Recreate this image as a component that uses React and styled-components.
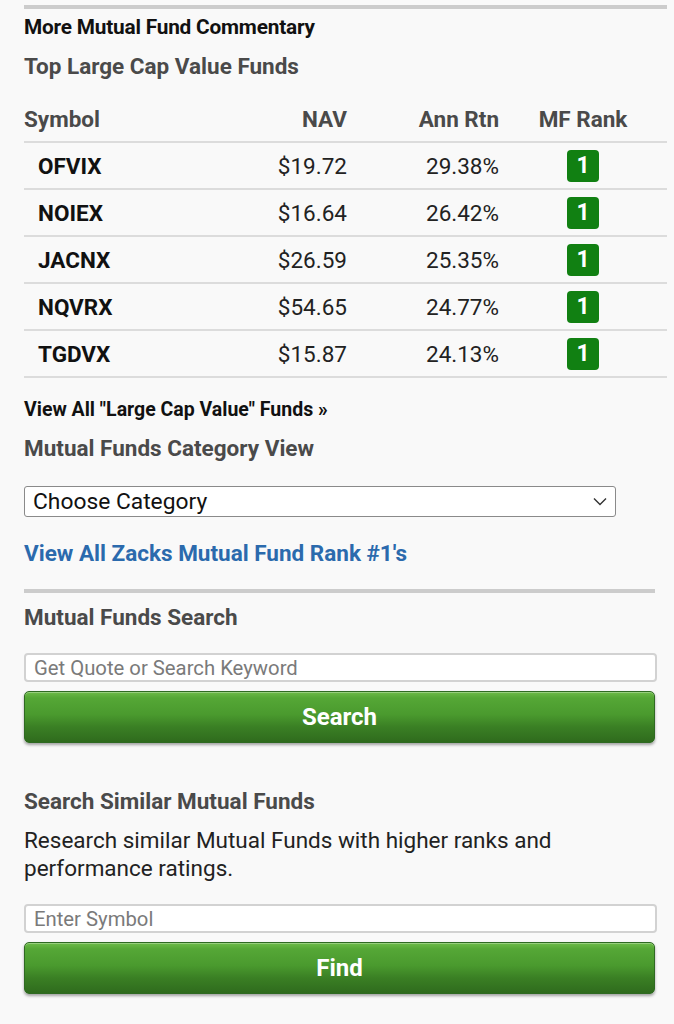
import React from "react";
import styled, { createGlobalStyle } from "styled-components";

const funds = [
  { symbol: "OFVIX", nav: "$19.72", rtn: "29.38%", rank: 1 },
  { symbol: "NOIEX", nav: "$16.64", rtn: "26.42%", rank: 1 },
  { symbol: "JACNX", nav: "$26.59", rtn: "25.35%", rank: 1 },
  { symbol: "NQVRX", nav: "$54.65", rtn: "24.77%", rank: 1 },
  { symbol: "TGDVX", nav: "$15.87", rtn: "24.13%", rank: 1 },
];

function App() {
  return (
    <>
      <GlobalStyle />
      <Page>
        <Rule />
        <Commentary>More Mutual Fund Commentary</Commentary>
        <SectionTitle $top={13}>Top Large Cap Value Funds</SectionTitle>

        <Table>
          <HeadRow>
            <HeadCell>Symbol</HeadCell>
            <HeadCell $align="right">NAV</HeadCell>
            <HeadCell $align="right">Ann Rtn</HeadCell>
            <HeadCell $align="center">MF Rank</HeadCell>
          </HeadRow>
          {funds.map((f) => (
            <Row key={f.symbol}>
              <SymbolCell>{f.symbol}</SymbolCell>
              <Cell $align="right">{f.nav}</Cell>
              <Cell $align="right">{f.rtn}</Cell>
              <RankCell>
                <RankBadge>{f.rank}</RankBadge>
              </RankCell>
            </Row>
          ))}
        </Table>

        <ViewAll>View All "Large Cap Value" Funds »</ViewAll>
        <SectionTitle $top={12}>Mutual Funds Category View</SectionTitle>

        <SelectBox>
          <span>Choose Category</span>
          <svg width="14" height="9" viewBox="0 0 14 9" fill="none">
            <path d="M1 1.5l6 6 6-6" stroke="#333" strokeWidth="1.4" />
          </svg>
        </SelectBox>

        <BlueLink>View All Zacks Mutual Fund Rank #1's</BlueLink>

        <Lower>
          <Rule $top={22} />
          <SectionTitle $top={10}>Mutual Funds Search</SectionTitle>
          <TextInput $top={22} placeholder="Get Quote or Search Keyword" />
          <GreenButton>Search</GreenButton>

          <SectionTitle $top={44}>Search Similar Mutual Funds</SectionTitle>
          <Blurb>
            Research similar Mutual Funds with higher ranks and performance
            ratings.
          </Blurb>
          <TextInput $top={22} placeholder="Enter Symbol" />
          <GreenButton>Find</GreenButton>
        </Lower>
      </Page>
    </>
  );
}

export default App;

const GlobalStyle = createGlobalStyle`
  html, body {
    margin: 0;
    padding: 0;
    background: #f9f9f9;
  }
  body {
    font-family: Roboto, "Noto Sans", sans-serif;
    color: #111;
  }
  * {
    box-sizing: border-box;
  }
`;

const Page = styled.div`
  padding: 5px 7px 40px 24px;
  min-height: 1024px;
`;

const Rule = styled.div`
  height: 4px;
  background: #cccccc;
  margin-top: ${(p) => p.$top || 0}px;
`;

const Commentary = styled.div`
  margin-top: 6px;
  font-size: 20.8px;
  font-weight: 700;
  line-height: 24px;
  color: #111;
  letter-spacing: -0.2px;
`;

const SectionTitle = styled.div`
  margin-top: ${(p) => p.$top}px;
  font-size: 22.5px;
  font-weight: 700;
  line-height: 28px;
  color: #4a4a4a;
`;

const Table = styled.div`
  margin-top: 16px;
`;

const gridCols = `
  display: grid;
  grid-template-columns: 223px 100px 152px 1fr;
  align-items: center;
`;

const HeadRow = styled.div`
  ${gridCols}
  height: 47px;
  border-bottom: 2px solid #dcdcdc;
`;

const HeadCell = styled.div`
  text-align: ${(p) => p.$align || "left"};
  font-size: 22.5px;
  font-weight: 700;
  color: #4a4a4a;
  white-space: nowrap;
`;

const Row = styled.div`
  ${gridCols}
  height: 47px;
  border-bottom: 2px solid #dcdcdc;
`;

const Cell = styled.div`
  text-align: ${(p) => p.$align || "left"};
  font-size: 22.5px;
  color: #222;
`;

const RankCell = styled.div`
  display: flex;
  justify-content: center;
`;

const SymbolCell = styled.div`
  padding-left: 14px;
  font-size: 22.5px;
  font-weight: 700;
  color: #111;
`;

const RankBadge = styled.div`
  width: 32px;
  height: 32px;
  border-radius: 4px;
  background: #118012;
  color: #fff;
  font-size: 23px;
  font-weight: 700;
  display: flex;
  align-items: center;
  justify-content: center;
`;

const ViewAll = styled.div`
  margin-top: 20px;
  font-size: 19.5px;
  font-weight: 700;
  line-height: 24px;
  color: #111;
`;

const SelectBox = styled.div`
  margin-top: 24px;
  width: 592px;
  height: 31px;
  border: 1px solid #8a8a8a;
  border-radius: 3px;
  background: #fff;
  display: flex;
  align-items: center;
  justify-content: space-between;
  padding: 0 8px;
  font-size: 22.8px;
  color: #111;
`;

const BlueLink = styled.a`
  display: block;
  margin-top: 22px;
  font-size: 22.5px;
  font-weight: 700;
  line-height: 28px;
  color: #2b6aad;
  cursor: pointer;
`;

const Lower = styled.div`
  margin-right: 12px;
`;

const TextInput = styled.input`
  display: block;
  margin-top: ${(p) => p.$top}px;
  width: calc(100% + 2px);
  height: 29px;
  border: 2px solid #d2d2d2;
  border-radius: 4px;
  background: #fff;
  padding: 0 8px;
  font-family: Roboto, sans-serif;
  font-size: 20.3px;
  color: #222;

  &::placeholder {
    color: #7a7a7a;
  }
`;

const GreenButton = styled.button`
  display: block;
  margin-top: 9px;
  width: 100%;
  height: 52px;
  border: 1px solid #2f6a22;
  border-radius: 5px;
  background: linear-gradient(
    to bottom,
    #6dbb48 0%,
    #55a736 12%,
    #4a9a2e 45%,
    #3a7f24 70%,
    #2f6b1d 100%
  );
  box-shadow: 0 2px 3px rgba(0, 0, 0, 0.35), inset 0 1px 0 rgba(255, 255, 255, 0.3);
  color: #fff;
  font-family: Roboto, sans-serif;
  font-size: 24px;
  font-weight: 700;
  cursor: pointer;
`;

const Blurb = styled.p`
  margin: 11px 0 0;
  font-size: 22.5px;
  line-height: 28px;
  color: #222;
`;
